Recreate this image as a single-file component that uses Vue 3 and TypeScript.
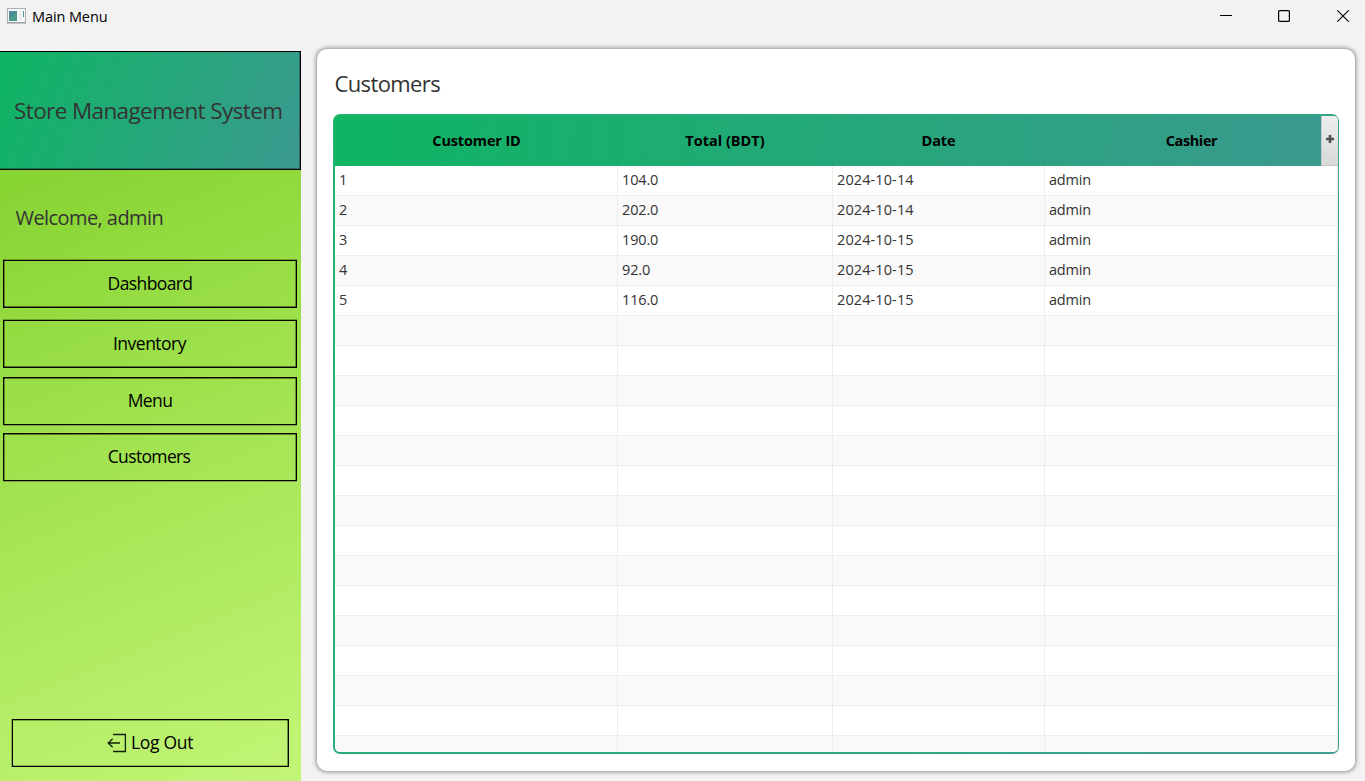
<script setup lang="ts">
interface Customer { id: string; total: string; date: string; cashier: string }

const menu = [
  { label: 'Dashboard', cls: 'dashboard' },
  { label: 'Inventory', cls: 'inventory' },
  { label: 'Menu', cls: 'menu' },
  { label: 'Customers', cls: 'customers' },
]
const columns = [
  { label: 'Customer ID', cls: 'h-id' },
  { label: 'Total (BDT)', cls: 'h-total' },
  { label: 'Date', cls: 'h-date' },
  { label: 'Cashier', cls: 'h-cashier' },
]
const customers: Customer[] = [
  { id: '1', total: '104.0', date: '2024-10-14', cashier: 'admin' },
  { id: '2', total: '202.0', date: '2024-10-14', cashier: 'admin' },
  { id: '3', total: '190.0', date: '2024-10-15', cashier: 'admin' },
  { id: '4', total: '92.0', date: '2024-10-15', cashier: 'admin' },
  { id: '5', total: '116.0', date: '2024-10-15', cashier: 'admin' },
]
const empty: Customer = { id: '', total: '', date: '', cashier: '' }
const rows: Customer[] = Array.from({ length: 20 }, (_, i) => customers[i] ?? empty)
</script>

<template>
  <div class="window">
    <header class="titlebar">
      <svg class="app-icon" width="19" height="16" viewBox="0 0 19 16">
        <rect x=".5" y=".5" width="18" height="14" fill="#f8f9fa" stroke="#a9b0ba" />
        <path d="M0 15h19" stroke="#8e959e" />
        <rect x="2" y="3" width="8" height="10" fill="#4c9a8c" />
        <path d="M2 3h8L2 11z" fill="#4d86a5" opacity=".6" />
        <rect x="12" y="3" width="3" height="10" fill="#eceef0" />
        <rect x="16" y="3" width="1" height="6" fill="#5595a4" />
      </svg>
      <span class="title">Main Menu</span>
      <div class="controls">
        <svg width="12" height="12" viewBox="0 0 12 12"><path d="M0 5.5h12" stroke="#000" /></svg>
        <svg width="12" height="12" viewBox="0 0 12 12"><rect x=".6" y=".6" width="10.8" height="10.8" rx="1" fill="none" stroke="#000" stroke-width="1.2" /></svg>
        <svg width="12" height="12" viewBox="0 0 12 12"><path d="M.3.3l11.4 11.4M11.7.3L.3 11.7" stroke="#000" stroke-width="1.1" /></svg>
      </div>
    </header>
    <div class="body">
      <aside class="sidebar">
        <div class="brand"><span>Store Management System</span></div>
        <p class="welcome">Welcome, admin</p>
        <nav>
          <button v-for="m in menu" :key="m.label" :class="m.cls"><span>{{ m.label }}</span></button>
        </nav>
        <button class="logout">
          <svg width="20" height="20" viewBox="0 0 20 20" fill="none" stroke="#10200a" stroke-width="1.3">
            <path d="M6 1.5h12.4v17H6M1.2 10H13M5.6 5.8L1.2 10l4.4 4.2" />
          </svg>
          <span>Log Out</span>
        </button>
      </aside>
      <main class="card">
        <h1>Customers</h1>
        <section class="table">
          <div class="thead">
            <div v-for="c in columns" :key="c.label" class="th" :class="c.cls"><span>{{ c.label }}</span></div>
            <div class="plus">
              <svg width="8" height="8" viewBox="0 0 8 8"><path d="M4 0v8M0 4h8" stroke="#505050" stroke-width="2.6" /></svg>
            </div>
          </div>
          <div class="tbody">
            <div v-for="(r, i) in rows" :key="i" class="row">
              <div class="td"><span>{{ r.id }}</span></div>
              <div class="td num"><span>{{ r.total }}</span></div>
              <div class="td date"><span>{{ r.date }}</span></div>
              <div class="td cashier"><span>{{ r.cashier }}</span></div>
            </div>
          </div>
        </section>
      </main>
    </div>
  </div>
</template>

<style>
html, body { margin: 0; overflow: hidden; }
</style>

<style scoped>
* { box-sizing: border-box; }
.window {
  width: 1365px; height: 781px; display: flex; flex-direction: column; overflow: hidden;
  background: #f3f3f3; color: #333; font-family: "Open Sans", "Noto Sans", sans-serif; white-space: nowrap;
}
.titlebar { height: 34px; flex: none; display: flex; align-items: center; padding: 0 15px 2px 7px; background: #f2f2f2; }
.title { margin-left: 6px; font-size: 14.5px; letter-spacing: -.1px; color: #000; }
.controls { margin-left: auto; display: flex; gap: 46px; padding-right: 1px; }
.controls svg { display: block; }
.controls svg:last-child { margin-left: 1px; }
.body { flex: 1; display: flex; min-height: 0; }
.sidebar {
  width: 301px; margin-top: 17px; display: flex; flex-direction: column; align-items: flex-start;
  background: linear-gradient(157.6deg, #7ccd26, #99de46 40%, #c3f577);
}
.brand {
  width: 301px; height: 119px; flex: none; display: flex; align-items: center; padding: 0 0 1px 14px;
  border: 1px solid #000; border-left: 0; box-shadow: inset -1px -1px rgba(0, 0, 0, .3); font-size: 22.5px; letter-spacing: -.61px;
  background: linear-gradient(111.4deg, #0fb563, #3a998f);
}
.welcome { margin: 34px 0 0 15.5px; height: 28px; line-height: 28px; font-size: 20px; letter-spacing: -.57px; }
nav { width: 301px; margin-top: 28px; padding: 0 4px 0 3px; display: flex; flex-direction: column; }
button {
  height: 48px; padding: 0 0 2px; display: flex; align-items: center; justify-content: center;
  border: 1px solid #000; background: transparent; color: #000; font: inherit; font-size: 17.5px; letter-spacing: -.6px;
  box-shadow: inset 1px 0 rgba(0, 0, 0, .35), inset -1px 0 rgba(0, 0, 0, .35), inset 0 -1px rgba(0, 0, 0, .45), 0 -1px rgba(0, 0, 0, .28);
}
.inventory { margin-top: 12px; letter-spacing: -.5px; padding-right: 1px; }
.menu, .customers {
  margin-top: 9px;
  box-shadow: inset 1px 0 rgba(0, 0, 0, .35), inset -1px 0 rgba(0, 0, 0, .35), inset 0 1px rgba(0, 0, 0, .45), 0 1px rgba(0, 0, 0, .25);
}
.customers { margin-top: 8px; padding-right: 2px; letter-spacing: -.65px; }
.logout {
  width: 277px; margin: auto 0 14px 12px; gap: 4px; letter-spacing: -.3px; padding-right: 1px;
  box-shadow: -1px 0 rgba(0, 0, 0, .25), inset 0 1px rgba(0, 0, 0, .3), inset -1px 0 rgba(0, 0, 0, .4), inset 0 -1px rgba(0, 0, 0, .25);
}
.logout svg { margin-top: 1px; }
.card {
  width: 1038px; height: 722px; margin: 15px 0 0 16px; padding: 17px 16px; display: flex; flex-direction: column;
  border-radius: 10px; background: #fff; box-shadow: 0 0 4px 1px rgba(0, 0, 0, .42);
}
h1 { margin: 0 0 0 1.5px; height: 48px; line-height: 34px; font-size: 22px; font-weight: 400; letter-spacing: -.62px; }
.table {
  width: 1006px; height: 640px; padding: 2px 1px 2px 2px; border-radius: 7px; overflow: hidden;
  background: linear-gradient(122deg, #1db46e, #3fa091);
}
.thead {
  height: 50px; display: grid; grid-template-columns: 283px 215px 212px 276px 17px; color: #000;
  font-size: 14.5px; font-weight: 700; letter-spacing: -.15px; background: linear-gradient(93deg, #0fb563, #3a998f); border-radius: 6px 4px 0 0; overflow: hidden;
}
.th { display: flex; align-items: center; justify-content: center; padding-bottom: 2px; }
.h-total { letter-spacing: 0; padding-right: 1px; }
.h-date { padding-right: 1px; }
.h-cashier { padding-left: 17px; letter-spacing: -.4px; }
.plus { display: flex; align-items: center; justify-content: center; padding-bottom: 4px; border: solid #c8c8c8; border-width: 0 0 1px 1px; background: linear-gradient(#eee, #d8d8d8); }
.tbody { height: 586px; overflow: hidden; background: #fff; border-radius: 0 0 5px 5px; }
.row { height: 30px; display: grid; grid-template-columns: 283px 215px 212px 1fr; }
.row:nth-child(even) { background: #f9f9f9; }
.td { display: flex; align-items: center; padding: 0 0 2px 4px; border: solid #ededed; border-width: 0 1px 1px 0; font-size: 14.5px; }
.num { letter-spacing: -.15px; }
.date { letter-spacing: .1px; }
.cashier { letter-spacing: -.2px; }
</style>
